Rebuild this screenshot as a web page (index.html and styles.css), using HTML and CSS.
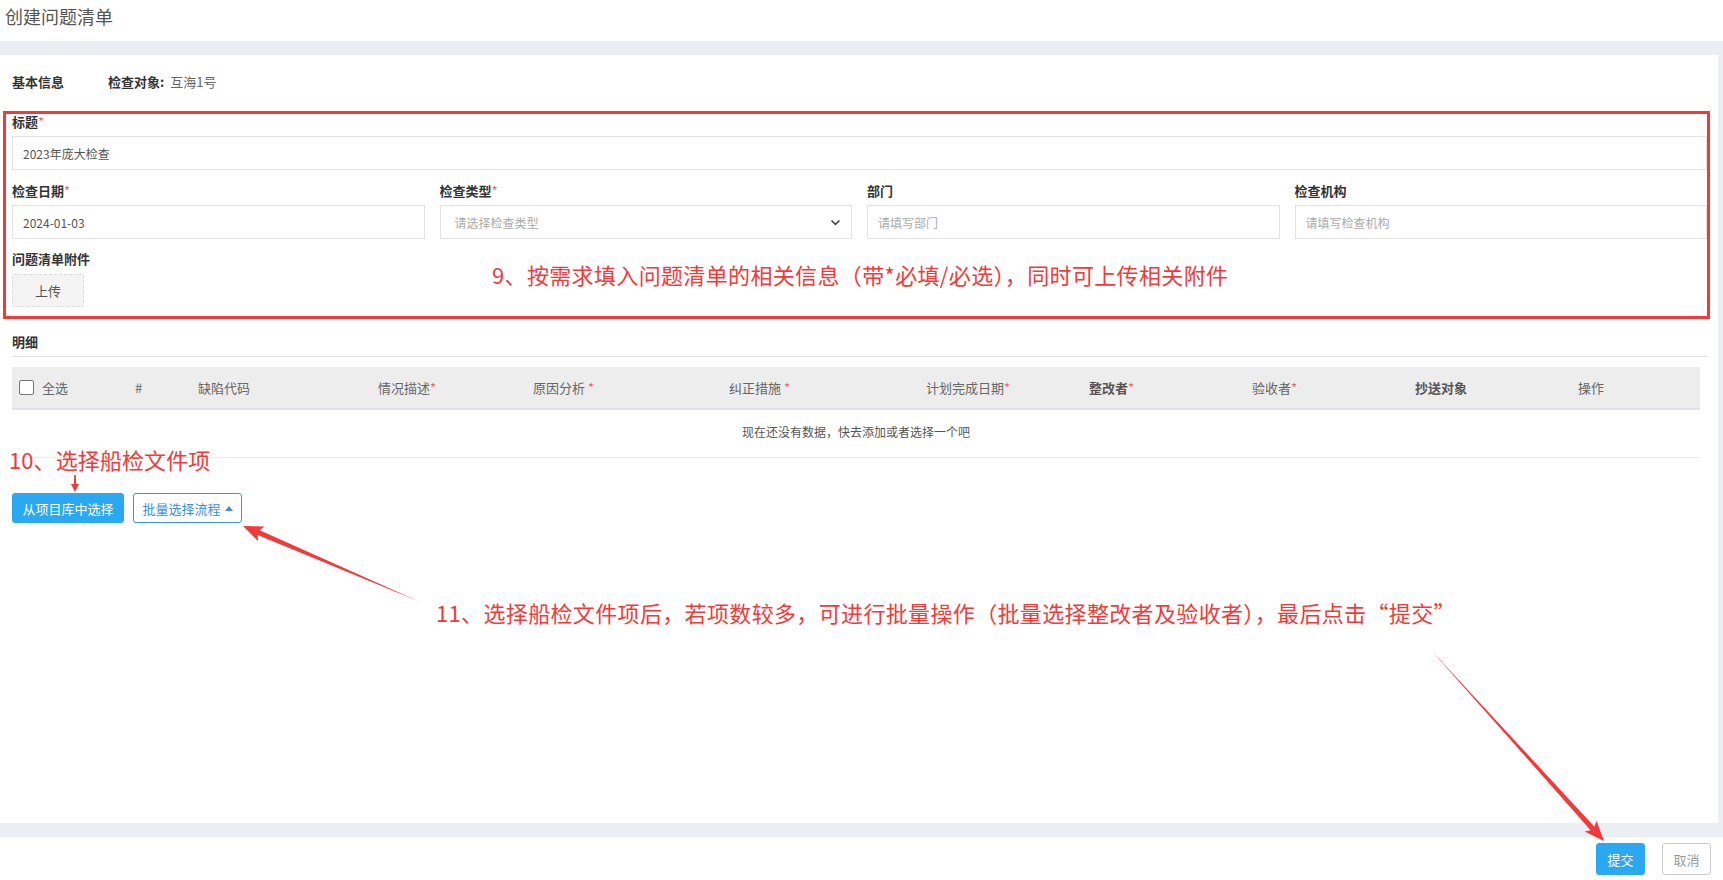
FILE: index.html
```html
<!DOCTYPE html>
<html lang="zh-CN">
<head>
<meta charset="utf-8">
<title>创建问题清单</title>
<link rel="stylesheet" href="styles.css">
</head>
<body>
<div class="page">
  <header class="topbar"><h1 class="page-title">创建问题清单</h1></header>
  <div class="band"></div>
  <main class="main">
    <div class="info-row">
      <span class="info-title">基本信息</span>
      <span class="info-label">检查对象:</span>
      <span class="info-value">互海1号</span>
    </div>

    <div class="field field-title">
      <div class="label">标题<span class="req">*</span></div>
      <div class="input">2023年庞大检查</div>
    </div>

    <div class="field-grid">
      <div class="field">
        <div class="label">检查日期<span class="req">*</span></div>
        <div class="input">2024-01-03</div>
      </div>
      <div class="field">
        <div class="label">检查类型<span class="req">*</span></div>
        <div class="input select placeholder">
          <span>请选择检查类型</span>
          <svg class="chev" width="11" height="7" viewBox="0 0 11 7"><path d="M1.5 1.5 L5.5 5.3 L9.5 1.5" fill="none" stroke="#444" stroke-width="1.7"/></svg>
        </div>
      </div>
      <div class="field">
        <div class="label">部门</div>
        <div class="input placeholder">请填写部门</div>
      </div>
      <div class="field">
        <div class="label">检查机构</div>
        <div class="input placeholder">请填写检查机构</div>
      </div>
    </div>

    <div class="field field-attach">
      <div class="label">问题清单附件</div>
      <button class="upload">上传</button>
    </div>

    <div class="section-title">明细</div>

    <div class="table">
      <div class="thead">
        <div class="th th-check"><span class="checkbox"></span><span>全选</span></div>
        <div class="th">#</div>
        <div class="th">缺陷代码</div>
        <div class="th">情况描述<span class="req">*</span></div>
        <div class="th">原因分析 <span class="req">*</span></div>
        <div class="th">纠正措施 <span class="req">*</span></div>
        <div class="th">计划完成日期<span class="req">*</span></div>
        <div class="th strong">整改者<span class="req">*</span></div>
        <div class="th">验收者<span class="req">*</span></div>
        <div class="th strong">抄送对象</div>
        <div class="th">操作</div>
      </div>
      <div class="empty">现在还没有数据，快去添加或者选择一个吧</div>
    </div>

    <div class="actions">
      <button class="btn btn-primary btn-lib">从项目库中选择</button>
      <button class="btn btn-outline">批量选择流程 <span class="caret"></span></button>
    </div>
  </main>
  <div class="band"></div>
  <footer class="footer">
    <button class="btn btn-primary btn-foot">提交</button>
    <button class="btn btn-cancel btn-foot">取消</button>
  </footer>

  <div class="note-box"></div>
  <div class="note note-9">9、按需求填入问题清单的相关信息（带*必填/必选），同时可上传相关附件</div>
  <div class="note note-10">10、选择船检文件项</div>
  <div class="note note-11">11、选择船检文件项后，若项数较多，可进行批量操作（批量选择整改者及验收者），最后点击“提交”</div>

  <svg class="arrows" width="1723" height="880" viewBox="0 0 1723 880">
    <g transform="translate(75 492) rotate(90)" fill="#f23a3a">
      <polygon points="-17,-0.8 -8,-1.2 -8,-4 0,0 -8,4 -8,1.2 -17,0.8"/>
    </g>
    <g transform="translate(243 526) rotate(203.2)" fill="#f23a3a">
      <polygon points="-191,0 -17,-2.6 -20,-8 0,0 -20,8 -17,2.6"/>
    </g>
    <g transform="translate(1604 841) rotate(47.8)" fill="#f23a3a">
      <polygon points="-258,0 -17,-2.6 -20,-8 0,0 -20,8 -17,2.6"/>
    </g>
  </svg>
</div>
</body>
</html>
```

FILE: styles.css
```css
* { box-sizing: border-box; }
html, body { margin: 0; padding: 0; }
body {
  font-family: "Noto Sans CJK SC", "Noto Sans", sans-serif;
  font-size: 13px;
  color: #333;
  background: #ebeef3;
}
.page {
  position: relative;
  width: 1723px;
  height: 880px;
  overflow: hidden;
  display: flex;
  flex-direction: column;
}
.topbar {
  height: 41px;
  background: #fff;
  padding: 4px 0 0 5px;
}
.page-title {
  margin: 0;
  font-size: 18px;
  font-weight: normal;
  line-height: 24px;
  color: #555;
}
.band { height: 14px; background: #ebeef3; flex: none; }
.main {
  height: 768px;
  flex: none;
  background: #fff;
  margin-right: 5px;
  padding: 17px 11px 0 12px;
  display: flex;
  flex-direction: column;
}
.info-row {
  display: flex;
  align-items: center;
  height: 20px;
  line-height: 20px;
  white-space: nowrap;
}
.info-title { font-weight: bold; color: #333; width: 96px; flex: none; }
.info-label { font-weight: bold; color: #333; margin-right: 6px; }
.info-value { color: #666; }

.field { display: flex; flex-direction: column; }
.field-title { margin-top: 20px; }
.label {
  font-weight: bold;
  color: #333;
  line-height: 20px;
  height: 20px;
  margin-bottom: 4px;
  white-space: nowrap;
}
.req { color: #e86a6a; font-weight: normal; }
.input {
  height: 34px;
  border: 1px solid #e3e3e3;
  padding: 0 10px;
  display: flex;
  align-items: center;
  font-size: 12px;
  color: #555;
  background: #fff;
}
.input.placeholder { color: #aaa; }
.input.select { padding: 0 10px 0 14px; justify-content: space-between; }
.chev { flex: none; }

.field-grid {
  display: grid;
  grid-template-columns: repeat(4, 1fr);
  column-gap: 15px;
  margin-top: 11px;
}
.field-attach { margin-top: 10px; }
.field-attach .label { margin-bottom: 5px; }

.upload {
  width: 72px;
  height: 33px;
  border: 1px dashed #dcdcdc;
  border-radius: 2px;
  background: #f4f4f4;
  color: #555;
  font-family: inherit;
  font-size: 13px;
}

.section-title {
  margin-top: 25px;
  font-weight: bold;
  line-height: 20px;
  padding-bottom: 4px;
  border-bottom: 1px solid #e6e6e6;
}

.table { margin-top: 10px; width: 1688px; border-bottom: 1px solid #ececec; }
.thead {
  display: grid;
  grid-template-columns: 123px 63px 180px 155px 196px 197px 163px 163px 163px 163px 122px;
  height: 43px;
  background: #ededed;
  border-bottom: 2px solid #dfe3e8;
  align-items: center;
  color: #666;
}
.th { white-space: nowrap; }
.th.strong { font-weight: bold; color: #555; }
.th-check { display: flex; align-items: center; padding-left: 7px; gap: 8px; }
.checkbox {
  width: 15px;
  height: 15px;
  border: 1px solid #777;
  border-radius: 2px;
  background: #fff;
  display: inline-block;
}
.empty {
  height: 47px;
  display: flex;
  align-items: center;
  justify-content: center;
  color: #555;
  font-size: 12px;
  padding-bottom: 4px;
}

.actions {
  display: flex;
  gap: 9px;
  margin-top: 35px;
}
.btn {
  font-family: inherit;
  font-size: 13px;
  height: 30px;
  border-radius: 3px;
  padding: 0 10px;
  cursor: pointer;
}
.btn-primary { background: #2aa8f2; border: 1px solid #2aa8f2; color: #fff; }
.btn-lib { width: 112px; padding: 0; }
.btn-outline {
  width: 109px;
  padding: 0;
  justify-content: center;
  background: #fff;
  border: 1px solid #3a96e0;
  color: #3a8ee0;
  display: inline-flex;
  align-items: center;
  gap: 4px;
}
.caret {
  width: 0; height: 0;
  border-left: 4px solid transparent;
  border-right: 4px solid transparent;
  border-bottom: 5px solid #3a8ee0;
}
.footer {
  flex: 1;
  background: #fff;
  display: flex;
  justify-content: flex-end;
  align-items: flex-start;
  gap: 17px;
  padding: 6px 12px 0 0;
}
.btn-foot { width: 49px; height: 32px; padding: 0; }
.btn-cancel { background: #fff; border: 1px solid #ccc; color: #999; }

.note-box {
  position: absolute;
  left: 3px;
  top: 111px;
  width: 1707px;
  height: 208px;
  border: 3px solid #f23a3a;
  pointer-events: none;
}
.note {
  position: absolute;
  color: #f23a3a;
  font-size: 22px;
  line-height: 30px;
  letter-spacing: 0.35px;
  white-space: nowrap;
}
.note-9 { left: 492px; top: 259px; }
.note-10 { left: 9px; top: 444px; letter-spacing: 0.1px; }
.note-11 { left: 436px; top: 597px; }
.arrows { position: absolute; left: 0; top: 0; pointer-events: none; }
```
